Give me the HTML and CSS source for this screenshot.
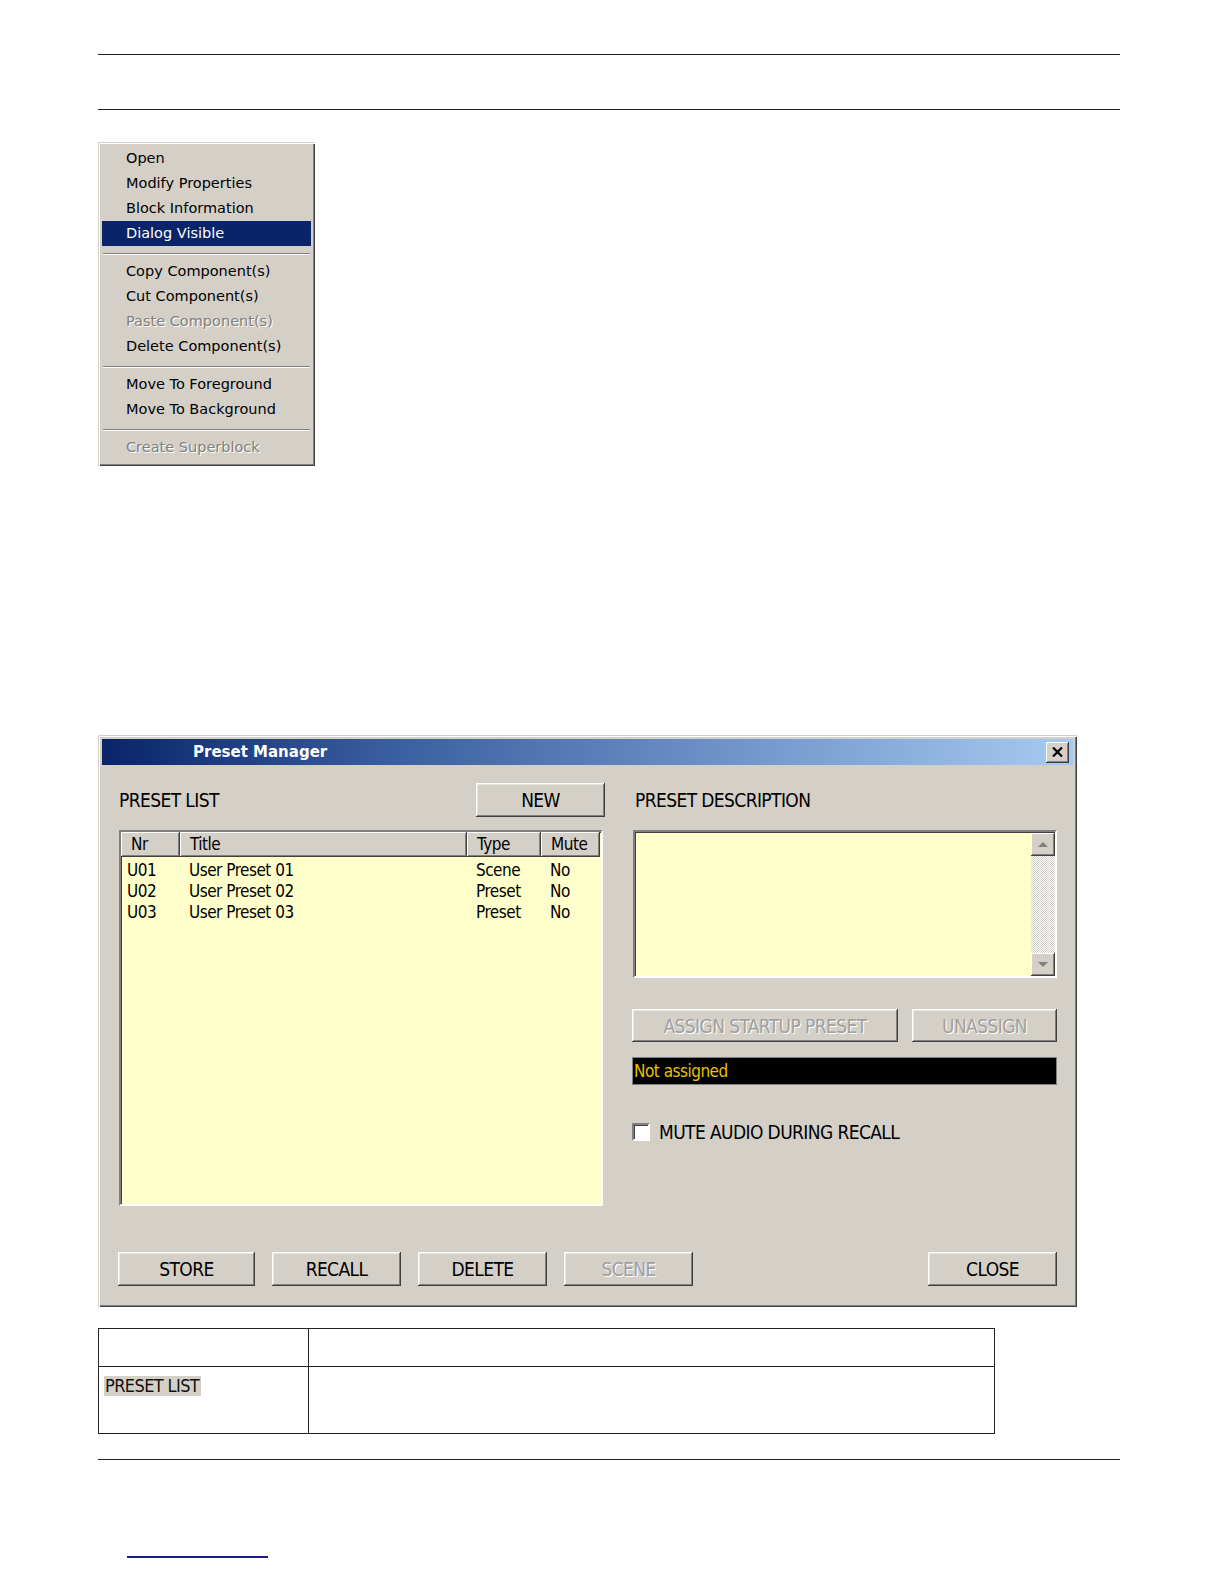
FILE: index.html
```html
<!DOCTYPE html>
<html lang="en">
<head>
    <meta charset="UTF-8">
    <title>Preset Manager</title>
    <link rel="stylesheet" href="styles.css">
</head>
<body>
<div class="page">
    <div class="rule"></div>
    <div class="rule rule-second"></div>

    <ul class="ctx-menu">
        <li>Open</li>
        <li>Modify Properties</li>
        <li>Block Information</li>
        <li class="active">Dialog Visible</li>
        <li class="sep"></li>
        <li>Copy Component(s)</li>
        <li>Cut Component(s)</li>
        <li class="disabled">Paste Component(s)</li>
        <li>Delete Component(s)</li>
        <li class="sep"></li>
        <li>Move To Foreground</li>
        <li>Move To Background</li>
        <li class="sep"></li>
        <li class="disabled">Create Superblock</li>
    </ul>

    <div class="dialog">
        <div class="titlebar">
            <span class="title">Preset Manager</span>
            <span class="close-btn">
                <svg width="11" height="10" viewBox="0 0 11 10"><path d="M1 0.5 L10 9.5 M10 0.5 L1 9.5" stroke="#000" stroke-width="2.2"/></svg>
            </span>
        </div>
        <div class="dialog-body">
            <div class="columns">
                <div class="col-left">
                    <div class="col-head">
                        <span class="label">PRESET LIST</span>
                        <button class="btn btn-new">NEW</button>
                    </div>
                    <div class="listbox">
                        <div class="list-head">
                            <span>Nr</span><span>Title</span><span>Type</span><span>Mute</span>
                        </div>
                        <div class="list-row"><span>U01</span><span>User Preset 01</span><span>Scene</span><span>No</span></div>
                        <div class="list-row"><span>U02</span><span>User Preset 02</span><span>Preset</span><span>No</span></div>
                        <div class="list-row"><span>U03</span><span>User Preset 03</span><span>Preset</span><span>No</span></div>
                    </div>
                </div>
                <div class="col-right">
                    <div class="col-head">
                        <span class="label label-desc">PRESET DESCRIPTION</span>
                    </div>
                    <div class="descbox">
                        <div class="desc-text"></div>
                        <div class="scrollbar">
                            <span class="sb-btn">
                                <svg width="10" height="6" viewBox="0 0 10 6"><path d="M5 0 L10 5 L0 5 Z" fill="#808080"/></svg>
                            </span>
                            <span class="sb-track"></span>
                            <span class="sb-btn">
                                <svg width="10" height="6" viewBox="0 0 10 6"><path d="M0 0 L10 0 L5 5 Z" fill="#808080"/></svg>
                            </span>
                        </div>
                    </div>
                    <div class="assign-row">
                        <button class="btn btn-assign" disabled>ASSIGN STARTUP PRESET</button>
                        <button class="btn btn-unassign" disabled>UNASSIGN</button>
                    </div>
                    <div class="startup-bar">Not assigned</div>
                    <label class="check-row">
                        <span class="checkbox"></span>
                        <span class="label">MUTE AUDIO DURING RECALL</span>
                    </label>
                </div>
            </div>
            <div class="bottom-row">
                <button class="btn btn-store">STORE</button>
                <button class="btn">RECALL</button>
                <button class="btn">DELETE</button>
                <button class="btn" disabled>SCENE</button>
                <button class="btn btn-close">CLOSE</button>
            </div>
        </div>
    </div>

    <table class="desc-table">
        <tr class="row-head">
            <td class="cell-key"></td>
            <td></td>
        </tr>
        <tr class="row-item">
            <td class="cell-key"><span class="shot-label">PRESET LIST</span></td>
            <td></td>
        </tr>
    </table>

    <div class="rule rule-footer"></div>
    <a class="footer-link" href="#"></a>
</div>
</body>
</html>
```

FILE: styles.css
```css
body {
    margin: 0;
    background: #fff;
    font-family: "Liberation Sans", Arial, sans-serif;
}
.page {
    width: 1022px;
    padding: 54px 0 0 98px;
}
.rule {
    border-top: 1px solid #222;
    height: 0;
}
.rule-second {
    margin-top: 54px;
}

/* context menu */
.ctx-menu {
    list-style: none;
    margin: 32px 0 0 0;
    padding: 4px 4px 6px 4px;
    width: 217px;
    box-sizing: border-box;
    background: #d4d0c8;
    box-shadow: inset 1px 1px #d4d0c8, inset 2px 2px #fff, inset -1px -1px #404040, inset -2px -2px #808080;
    font-family: "DejaVu Sans", Verdana, sans-serif;
    font-size: 14.5px;
    color: #000;
}
.ctx-menu li {
    height: 25px;
    line-height: 25px;
    padding-left: 24px;
}
.ctx-menu li.active {
    background: #0a246a;
    color: #fff;
}
.ctx-menu li.disabled {
    color: #808080;
    text-shadow: 1px 1px #fff;
}
.ctx-menu li.sep {
    height: 0;
    margin: 7px 1px 4px 1px;
    padding: 0;
    border-top: 1px solid #808080;
    border-bottom: 1px solid #fff;
}

/* dialog window */
.dialog {
    margin-top: 269px;
    width: 979px;
    height: 572px;
    box-sizing: border-box;
    padding: 4px;
    background: #d4d0c8;
    box-shadow: inset 1px 1px #d4d0c8, inset 2px 2px #fff, inset -1px -1px #404040, inset -2px -2px #808080;
    display: flex;
    flex-direction: column;
}
.titlebar {
    height: 26px;
    background: linear-gradient(to right, #0a246a 0%, #3a5fa0 30%, #a6caf0 100%);
    display: flex;
    align-items: center;
    justify-content: space-between;
    padding: 0 4px 0 91px;
}
.title {
    color: #fff;
    font-family: "DejaVu Sans", Verdana, sans-serif;
    font-weight: bold;
    font-size: 15px;
}
.close-btn {
    width: 23px;
    height: 21px;
    box-sizing: border-box;
    background: #d4d0c8;
    box-shadow: inset -1px -1px #404040, inset 1px 1px #fff, inset -2px -2px #808080;
    display: flex;
    align-items: center;
    justify-content: center;
}
.dialog-body {
    flex: 1;
    display: flex;
    flex-direction: column;
    padding: 18px 16px 17px 17px;
}
.columns {
    display: grid;
    grid-template-columns: 484px 425px;
    column-gap: 29px;
}
.col-head {
    height: 34px;
    display: flex;
    align-items: center;
    justify-content: space-between;
}
.label {
    font-family: "DejaVu Sans Condensed", "Liberation Sans", sans-serif;
    font-size: 19px;
    letter-spacing: -0.6px;
    color: #000;
}
.label-desc {
    padding-left: 3px;
}

/* buttons */
.btn {
    font-family: "DejaVu Sans Condensed", "Liberation Sans", sans-serif;
    font-size: 19px;
    letter-spacing: -0.6px;
    color: #000;
    background: #d4d0c8;
    border: none;
    height: 34px;
    width: 129px;
    padding: 0;
    box-shadow: inset -1px -1px #404040, inset 1px 1px #fff, inset -2px -2px #808080, inset 2px 2px #e8e6e0;
}
.btn:disabled {
    color: #a0a0a0;
    text-shadow: 1px 1px #fff;
}
.btn-new {
    margin-right: -2px;
}

/* preset list */
.listbox {
    margin-top: 13px;
    height: 376px;
    box-sizing: border-box;
    background: #ffffcc;
    border: 2px solid;
    border-color: #808080 #fff #fff #808080;
    box-shadow: inset 1px 1px #404040;
    font-family: "DejaVu Sans Condensed", "Liberation Sans", sans-serif;
    font-size: 17px;
    letter-spacing: -0.5px;
}
.list-head,
.list-row {
    display: grid;
    grid-template-columns: 59px 287px 74px 1fr;
}
.list-head {
    height: 24px;
    margin-right: 1px;
}
.list-head span {
    background: #d4d0c8;
    box-shadow: inset -1px -1px #404040, inset 1px 1px #fff, inset -2px -2px #808080;
    padding-left: 10px;
    line-height: 25px;
}
.list-row {
    height: 21px;
    line-height: 21px;
}
.list-head + .list-row {
    margin-top: 4px;
}
.list-row span {
    padding-left: 9px;
}
.list-row span:first-child {
    padding-left: 6px;
}

/* description */
.descbox {
    margin: 13px 0 0 1px;
    height: 148px;
    box-sizing: border-box;
    background: #ffffcc;
    border: 2px solid;
    border-color: #808080 #fff #fff #808080;
    box-shadow: inset 1px 1px #404040;
    display: flex;
}
.desc-text {
    flex: 1;
}
.scrollbar {
    width: 24px;
    display: flex;
    flex-direction: column;
    padding: 1px 0 0 0;
}
.sb-btn {
    height: 23px;
    background: #d4d0c8;
    box-shadow: inset -1px -1px #404040, inset 1px 1px #fff, inset -2px -2px #808080;
    display: flex;
    align-items: center;
    justify-content: center;
}
.sb-track {
    flex: 1;
    background: repeating-conic-gradient(#d4d0c8 0 25%, #fff 0 50%) 0 0 / 2px 2px;
}
.assign-row {
    margin-top: 31px;
    display: flex;
    justify-content: space-between;
}
.btn-assign {
    width: 266px;
    height: 33px;
}
.btn-unassign {
    width: 145px;
    height: 33px;
}
.startup-bar {
    margin-top: 15px;
    height: 28px;
    background: #000;
    border: 1px solid #808080;
    box-sizing: border-box;
    color: #e8c200;
    font-family: "DejaVu Sans Condensed", "Liberation Sans", sans-serif;
    font-size: 17px;
    letter-spacing: -0.5px;
    line-height: 26px;
    padding-left: 1px;
}
.check-row {
    margin-top: 36px;
    display: flex;
    align-items: center;
    gap: 9px;
}
.checkbox {
    width: 18px;
    height: 18px;
    box-sizing: border-box;
    background: #fff;
    border: 2px solid;
    border-color: #808080 #fff #fff #808080;
    box-shadow: inset 1px 1px #404040;
}
.bottom-row {
    margin-top: auto;
    display: flex;
    gap: 17px;
}
.btn-store {
    width: 137px;
    margin-left: -1px;
}
.btn-close {
    margin-left: auto;
}

/* description table under the screenshot */
.desc-table {
    margin-top: 21px;
    width: 897px;
    border-collapse: collapse;
}
.desc-table td {
    border: 1px solid #222;
    padding: 0;
    vertical-align: top;
}
.desc-table .cell-key {
    width: 209px;
}
.row-head td {
    height: 37px;
}
.row-item td {
    height: 66px;
}
.shot-label {
    display: inline-block;
    margin: 9px 0 0 5px;
    background: #d4d0c8;
    padding: 0 2px 0 1px;
    font-family: "DejaVu Sans Condensed", "Liberation Sans", sans-serif;
    font-size: 18px;
    letter-spacing: -0.6px;
    line-height: 20px;
    color: #111;
}
.rule-footer {
    margin-top: 25px;
}
.footer-link {
    display: block;
    margin: 96px 0 0 29px;
    width: 141px;
    height: 0;
    border-bottom: 2px solid #1a1a8c;
}
```
